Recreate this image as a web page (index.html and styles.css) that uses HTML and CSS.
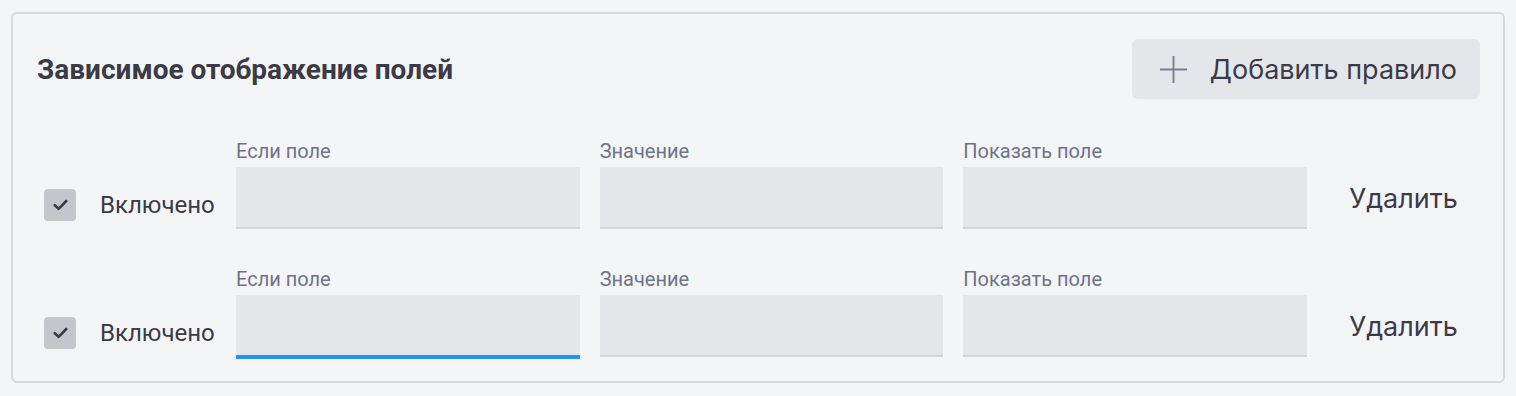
FILE: index.html
```html
<!DOCTYPE html>
<html lang="ru">
<head>
<meta charset="UTF-8">
<meta name="viewport" content="width=device-width, initial-scale=1.0">
<title>Зависимое отображение полей</title>
<link rel="stylesheet" href="styles.css">
</head>
<body>

<div class="card">
    <div class="card-head">
        <h2>Зависимое отображение полей</h2>
        <button class="btn-add">
            <svg width="30" height="30" viewBox="0 0 30 30"><path d="M15 1v28M1 15h28" stroke="#7b7e8e" stroke-width="2" fill="none"/></svg>
            Добавить правило
        </button>
    </div>

    <div class="rule">
        <label class="toggle"><span class="check"><svg width="15" height="12" viewBox="0 0 15 12"><path d="M1.8 6.2l3.9 3.7L13.2 2" stroke="#3a3a48" stroke-width="2.6" fill="none" stroke-linecap="round" stroke-linejoin="round"/></svg></span>Включено</label>
        <div class="field"><span>Если поле</span><div class="input"></div></div>
        <div class="field"><span>Значение</span><div class="input"></div></div>
        <div class="field"><span>Показать поле</span><div class="input"></div></div>
        <button class="btn-remove">Удалить</button>
    </div>

    <div class="rule">
        <label class="toggle"><span class="check"><svg width="15" height="12" viewBox="0 0 15 12"><path d="M1.8 6.2l3.9 3.7L13.2 2" stroke="#3a3a48" stroke-width="2.6" fill="none" stroke-linecap="round" stroke-linejoin="round"/></svg></span>Включено</label>
        <div class="field"><span>Если поле</span><div class="input focus"></div></div>
        <div class="field"><span>Значение</span><div class="input"></div></div>
        <div class="field"><span>Показать поле</span><div class="input"></div></div>
        <button class="btn-remove">Удалить</button>
    </div>
</div>

</body>
</html>
```

FILE: styles.css
```css
* { margin: 0; padding: 0; box-sizing: border-box; font-family: Roboto, "Noto Sans", sans-serif; }
body { background: #f4f5f7; color: #3a3a48; padding: 12px 11px; }

.card { border: 2px solid #d8d9dd; border-radius: 6px; padding: 25px 23px 24px 24px; }
.card-head { display: flex; align-items: center; justify-content: space-between; }
.card-head h2 { font-size: 28px; font-weight: 700; color: #3a3a48; }

.btn-add { display: flex; align-items: center; gap: 22px; height: 60px; padding: 0 23px 0 27px; background: #e5e6ea; border: none; border-radius: 6px; font-family: Inter, sans-serif; font-size: 27px; color: #3a3a48; }
.btn-add svg { width: 29px; height: 29px; }

.rule { display: flex; align-items: flex-end; gap: 20px; margin-top: 40px; }
.rule + .rule { margin-top: 38px; }
.toggle { display: flex; align-items: center; gap: 24px; width: 179px; padding-left: 7px; margin-bottom: 8px; font-size: 24px; }
.check { display: flex; align-items: center; justify-content: center; width: 32px; height: 32px; border-radius: 4px; background: #c5c6cb; }

.field { flex: 1; display: flex; flex-direction: column; gap: 4px; }
.field span { font-size: 20px; line-height: 24px; color: #6f7387; }
.input { height: 62px; background: #e5e6ea; border-bottom: 2px solid #d3d4d9; }
.input.focus { height: 64px; margin-bottom: -2px; border-bottom: 4px solid #2196ea; }

.btn-remove { width: 153px; height: 62px; background: none; border: none; font-family: Inter, sans-serif; font-size: 27px; color: #3a3a48; }
```
